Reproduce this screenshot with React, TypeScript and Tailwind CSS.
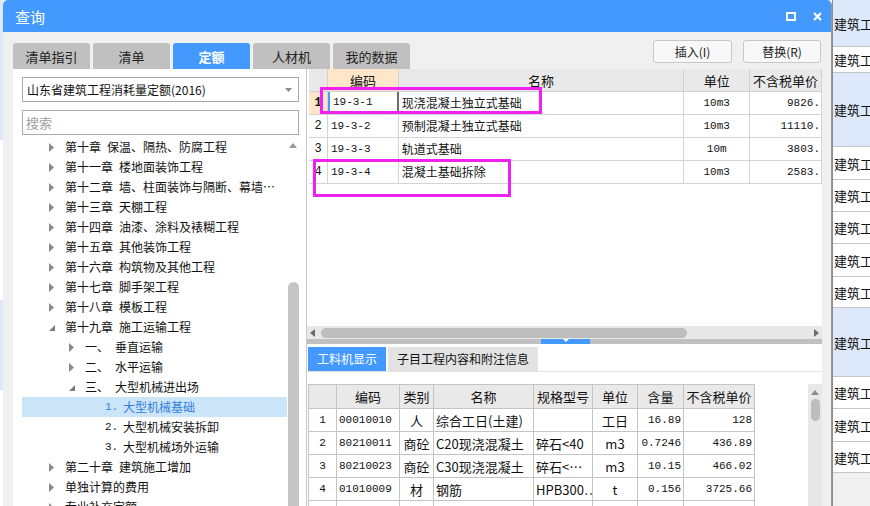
import React from 'react';

type TreeNode = {
  level: 1 | 2 | 3;
  label: string;
  name?: string;
  state?: 'closed' | 'open' | 'leaf';
  selected?: boolean;
};

const tree: TreeNode[] = [
  { level: 1, label: '第十章', name: '保温、隔热、防腐工程', state: 'closed' },
  { level: 1, label: '第十一章', name: '楼地面装饰工程', state: 'closed' },
  { level: 1, label: '第十二章', name: '墙、柱面装饰与隔断、幕墙…', state: 'closed' },
  { level: 1, label: '第十三章', name: '天棚工程', state: 'closed' },
  { level: 1, label: '第十四章', name: '油漆、涂料及裱糊工程', state: 'closed' },
  { level: 1, label: '第十五章', name: '其他装饰工程', state: 'closed' },
  { level: 1, label: '第十六章', name: '构筑物及其他工程', state: 'closed' },
  { level: 1, label: '第十七章', name: '脚手架工程', state: 'closed' },
  { level: 1, label: '第十八章', name: '模板工程', state: 'closed' },
  { level: 1, label: '第十九章', name: '施工运输工程', state: 'open' },
  { level: 2, label: '一、', name: '垂直运输', state: 'closed' },
  { level: 2, label: '二、', name: '水平运输', state: 'closed' },
  { level: 2, label: '三、', name: '大型机械进出场', state: 'open' },
  { level: 3, label: '1.', name: '大型机械基础', state: 'leaf', selected: true },
  { level: 3, label: '2.', name: '大型机械安装拆卸', state: 'leaf' },
  { level: 3, label: '3.', name: '大型机械场外运输', state: 'leaf' },
  { level: 1, label: '第二十章', name: '建筑施工增加', state: 'closed' },
  { level: 1, label: '单独计算的费用', state: 'closed' },
  { level: 1, label: '专业补充定额', state: 'closed' },
];

const quotas = [
  { no: '1', code: '19-3-1', name: '现浇混凝土独立式基础', unit: '10m3', price: '9826.' },
  { no: '2', code: '19-3-2', name: '预制混凝土独立式基础', unit: '10m3', price: '11110.' },
  { no: '3', code: '19-3-3', name: '轨道式基础', unit: '10m', price: '3803.' },
  { no: '4', code: '19-3-4', name: '混凝土基础拆除', unit: '10m3', price: '2583.' },
];

const materials = [
  { no: '1', code: '00010010', kind: '人', name: '综合工日(土建)', spec: '', unit: '工日', qty: '16.89', price: '128' },
  { no: '2', code: '80210011', kind: '商砼', name: 'C20现浇混凝土', spec: '碎石<40', unit: 'm3', qty: '0.7246', price: '436.89' },
  { no: '3', code: '80210023', kind: '商砼', name: 'C30现浇混凝土', spec: '碎石<…', unit: 'm3', qty: '10.15', price: '466.02' },
  { no: '4', code: '01010009', kind: '材', name: '钢筋', spec: 'HPB300…', unit: 't', qty: '0.156', price: '3725.66' },
  { no: '5', code: '01010010', kind: '材', name: '钢筋', spec: '', unit: 't', qty: '', price: '' },
];

const sideRows = [
  { h: 'h-[47px]', blue: true },
  { h: 'h-[26px]', blue: false },
  { h: 'h-[74px]', blue: true },
  { h: 'h-[33px]', blue: false },
  { h: 'h-[32px]', blue: false },
  { h: 'h-[32px]', blue: false },
  { h: 'h-[33px]', blue: false },
  { h: 'h-[31px]', blue: false },
  { h: 'h-[69px]', blue: true },
  { h: 'h-[32px]', blue: false },
  { h: 'h-[33px]', blue: false },
  { h: 'h-[31px]', blue: false },
];

function Caret({ open }: { open: boolean }) {
  if (open) {
    return (
      <svg width="7" height="7" viewBox="0 0 7 7" className="mt-[3px]">
        <path d="M6 0 L6 6 L0 6 Z" fill="#7b7b7b" />
      </svg>
    );
  }
  return (
    <svg width="5" height="9" viewBox="0 0 5 9">
      <path d="M0 0 L5 4.5 L0 9 Z" fill="#8a8a8a" />
    </svg>
  );
}

function TreeRow({ node }: { node: TreeNode }) {
  const text = node.selected ? 'text-[#2f7fe0]' : 'text-[#111]';
  return (
    <div
      className={`flex items-center h-[20px] whitespace-nowrap ${
        node.selected ? 'bg-[#cce4f7]' : ''
      } ${text}`}
    >
      {node.level === 1 && (
        <>
          <span className="w-[27px] shrink-0" />
          <span className="w-[16px] shrink-0 flex items-center">
            <Caret open={node.state === 'open'} />
          </span>
          <span>{node.label}</span>
          {node.name && <span className="ml-[6px]">{node.name}</span>}
        </>
      )}
      {node.level === 2 && (
        <>
          <span className="w-[47px] shrink-0" />
          <span className="w-[16px] shrink-0 flex items-center">
            <Caret open={node.state === 'open'} />
          </span>
          <span className="w-[30px] shrink-0">{node.label}</span>
          <span>{node.name}</span>
        </>
      )}
      {node.level === 3 && (
        <>
          <span className="w-[83px] shrink-0" />
          <span className="w-[18px] shrink-0 font-['Liberation_Mono',monospace] text-[11px]">{node.label}</span>
          <span>{node.name}</span>
        </>
      )}
    </div>
  );
}

export default function App() {
  return (
    <div className="flex w-[870px] h-[506px] overflow-hidden bg-white font-['Noto_Sans_CJK_SC','Noto_Sans',sans-serif] text-[12px] leading-none text-[#111]">
      {/* page behind the dialog, left edge */}
      <div className="w-[3px] shrink-0 flex flex-col">
        <div className="h-[140px] bg-[#dce8fb]" />
        <div className="h-[160px] bg-white" />
        <div className="h-[90px] bg-[#dce8fb]" />
        <div className="flex-1 bg-white" />
      </div>

      {/* dialog */}
      <div className="w-[829px] shrink-0 flex flex-col bg-[#f0f0f0] rounded-t-[5px] overflow-hidden border-r border-[#9a9a9a]">
        <div className="h-[32px] shrink-0 bg-[#4499ff] flex items-center pl-[12px] pr-[9px] text-white">
          <span className="text-[15px]">查询</span>
          <div className="ml-auto flex items-center gap-[17px]">
            <svg width="10" height="9" viewBox="0 0 10 9">
              <rect x="1" y="1" width="8" height="7" fill="none" stroke="#fff" strokeWidth="2" />
            </svg>
            <svg width="9" height="9" viewBox="0 0 9 9">
              <path d="M1 1 L8 8 M8 1 L1 8" stroke="#fff" strokeWidth="2.2" />
            </svg>
          </div>
        </div>

        <div className="h-[37px] shrink-0 flex px-[10px]">
          <div className="flex self-end gap-[3px]">
            {['清单指引', '清单', '定额', '人材机', '我的数据'].map((t) => (
              <div
                key={t}
                className={`w-[77px] h-[26px] rounded-t-[3px] flex items-center justify-center text-[13px] ${
                  t === '定额' ? 'bg-[#4499ff] text-white font-bold' : 'bg-[#c0c0c0] text-[#222]'
                }`}
              >
                {t}
              </div>
            ))}
          </div>
          <div className="ml-auto mt-[8px] flex gap-[11px] self-start">
            <button className="w-[79px] h-[23px] bg-[#f8f8f8] border border-[#c6c6c6] rounded-[3px] text-[12px] text-[#222]">
              插入(I)
            </button>
            <button className="w-[78px] h-[23px] bg-[#f8f8f8] border border-[#c6c6c6] rounded-[3px] text-[12px] text-[#222]">
              替换(R)
            </button>
          </div>
        </div>

        <div className="flex-1 flex pl-[10px] pr-[9px] min-h-0">
          {/* left panel */}
          <div className="w-[293px] shrink-0 bg-white flex flex-col pt-[8px] pl-[9px] pr-[7px]">
            <div className="h-[25px] shrink-0 border border-[#a9a9a9] flex items-center pl-[4px] pr-[6px]">
              <span>山东省建筑工程消耗量定额(2016)</span>
              <svg width="7" height="4" viewBox="0 0 7 4" className="ml-auto">
                <path d="M0 0 L7 0 L3.5 4 Z" fill="#8a8a8a" />
              </svg>
            </div>
            <div className="h-[25px] shrink-0 mt-[8px] border border-[#a9a9a9] flex items-center pl-[3px] text-[#a0a0a0] text-[13px]">
              搜索
            </div>
            <div className="flex-1 flex mt-[2px] min-h-0 overflow-hidden">
              <div className="flex-1 min-w-0">
                {tree.map((n, i) => (
                  <TreeRow key={i} node={n} />
                ))}
              </div>
              <div className="w-[12px] shrink-0 flex flex-col items-center pt-[6px]">
                <svg width="8" height="5" viewBox="0 0 8 5">
                  <path d="M0 5 L4 0 L8 5 Z" fill="#9a9a9a" />
                </svg>
                <div className="mt-[134px] w-[11px] flex-1 rounded-t-full bg-[#c6c6c6]" />
              </div>
            </div>
          </div>

          {/* right panel */}
          <div className="flex-1 min-w-0 bg-white border-l border-[#c8c8c8] flex flex-col pl-[2px] relative">
            <div className="h-[257px] shrink-0">
              <div className="flex h-[23px] bg-[#e9e9e9] border-b border-[#d0d0d0]">
                <div className="w-[19px] border-r border-[#d0d0d0]" />
                <div className="w-[71px] border-r border-[#d0d0d0] bg-[#fde6c9] flex items-center justify-center text-[13px]">编码</div>
                <div className="w-[286px] border-r border-[#d0d0d0] flex items-center justify-center text-[13px]">名称</div>
                <div className="w-[66px] border-r border-[#d0d0d0] flex items-center justify-center text-[13px]">单位</div>
                <div className="w-[72px] border-r border-[#d0d0d0] flex items-center justify-center text-[13px]">不含税单价</div>
              </div>
              {quotas.map((q, i) => (
                <div key={q.no} className="flex h-[23px] border-b border-[#d4d4d4]">
                  <div
                    className={`w-[19px] border-r border-[#d4d4d4] flex items-center justify-center font-['Liberation_Mono',monospace] text-[12px] ${
                      i === 0 ? 'bg-[#fde6c9] font-bold' : ''
                    }`}
                  >
                    {q.no}
                  </div>
                  <div
                    className={`w-[71px] flex items-center pl-[3px] font-['Liberation_Mono',monospace] text-[11px] ${
                      i === 0
                        ? 'border-l-2 border-l-[#4a9cf5] border-r-2 border-r-[#6c6c6c] border-b border-b-[#6c6c6c]'
                        : 'border-r border-[#d4d4d4]'
                    }`}
                  >
                    {q.code}
                  </div>
                  <div className="w-[286px] border-r border-[#d4d4d4] flex items-center pl-[3px]">{q.name}</div>
                  <div className="w-[66px] border-r border-[#d4d4d4] flex items-center justify-center font-['Liberation_Mono',monospace] text-[11px]">
                    {q.unit}
                  </div>
                  <div className="w-[72px] border-r border-[#d4d4d4] flex items-center justify-end pr-[1px] font-['Liberation_Mono',monospace] text-[11px]">
                    {q.price}
                  </div>
                </div>
              ))}
            </div>

            {/* horizontal scrollbar */}
            <div className="h-[13px] shrink-0 -ml-[2px] bg-[#e8e8e8] flex items-center px-[3px]">
              <svg width="5" height="8" viewBox="0 0 5 8">
                <path d="M5 0 L0 4 L5 8 Z" fill="#6a6a6a" />
              </svg>
              <div className="ml-[6px] w-[366px] h-[10px] rounded-full bg-[#bdbdbd]" />
              <svg width="5" height="8" viewBox="0 0 5 8" className="ml-auto">
                <path d="M0 0 L5 4 L0 8 Z" fill="#6a6a6a" />
              </svg>
            </div>
            {/* splitter */}
            <div className="h-[5px] shrink-0 -ml-[2px] bg-[#c0c0c0] flex">
              <div className="ml-[234px] w-[49px] bg-[#4499ff] flex justify-center">
                <svg width="6" height="3" viewBox="0 0 6 3">
                  <path d="M0 0 L6 0 L3 3 Z" fill="#fff" />
                </svg>
              </div>
            </div>

            {/* lower tabs */}
            <div className="h-[28px] shrink-0 flex items-end border-b border-[#e2e2e2] -ml-[1px]">
              <div className="w-[78px] h-[24px] bg-[#4499ff] text-white flex items-center justify-center text-[12px]">
                工料机显示
              </div>
              <div className="ml-[2px] w-[150px] h-[24px] bg-[#e3e3e3] flex items-center justify-center text-[12px]">
                子目工程内容和附注信息
              </div>
            </div>

            <div className="flex-1 flex pt-[12px] -ml-[1px] min-h-0 overflow-hidden">
              <div className="border-l border-t border-[#c4c4c4]">
                <div className="flex h-[24px] bg-[#e9e9e9] text-[13px]">
                  <div className="w-[28px] border-r border-b border-[#c4c4c4]" />
                  <div className="w-[63px] border-r border-b border-[#c4c4c4] flex items-center justify-center">编码</div>
                  <div className="w-[34px] border-r border-b border-[#c4c4c4] flex items-center justify-center">类别</div>
                  <div className="w-[100px] border-r border-b border-[#c4c4c4] flex items-center justify-center">名称</div>
                  <div className="w-[59px] border-r border-b border-[#c4c4c4] flex items-center justify-center">规格型号</div>
                  <div className="w-[45px] border-r border-b border-[#c4c4c4] flex items-center justify-center">单位</div>
                  <div className="w-[46px] border-r border-b border-[#c4c4c4] flex items-center justify-center">含量</div>
                  <div className="w-[71px] border-r border-b border-[#c4c4c4] flex items-center justify-center">不含税单价</div>
                </div>
                {materials.map((m) => (
                  <div key={m.no} className="flex h-[23px] whitespace-nowrap">
                    <div className="w-[28px] border-r border-b border-[#c4c4c4] flex items-center justify-center font-['Liberation_Mono',monospace] text-[11px]">
                      {m.no}
                    </div>
                    <div className="w-[63px] border-r border-b border-[#c4c4c4] flex items-center pl-[2px] font-['Liberation_Mono',monospace] text-[11px]">
                      {m.code}
                    </div>
                    <div className="w-[34px] border-r border-b border-[#c4c4c4] flex items-center justify-center text-[13px]">
                      {m.kind}
                    </div>
                    <div className="w-[100px] border-r border-b border-[#c4c4c4] flex items-center pl-[2px] overflow-hidden text-[13px]">
                      {m.name}
                    </div>
                    <div className="w-[59px] border-r border-b border-[#c4c4c4] flex items-center pl-[2px] overflow-hidden text-[13px]">
                      {m.spec}
                    </div>
                    <div className="w-[45px] border-r border-b border-[#c4c4c4] flex items-center justify-center text-[13px]">
                      {m.unit}
                    </div>
                    <div className="w-[46px] border-r border-b border-[#c4c4c4] flex items-center justify-end pr-[2px] font-['Liberation_Mono',monospace] text-[11px]">
                      {m.qty}
                    </div>
                    <div className="w-[71px] border-r border-b border-[#c4c4c4] flex items-center justify-end pr-[2px] font-['Liberation_Mono',monospace] text-[11px]">
                      {m.price}
                    </div>
                  </div>
                ))}
              </div>
              <div className="ml-auto w-[14px] bg-[#e8e8e8] flex flex-col items-center pt-[6px]">
                <svg width="8" height="5" viewBox="0 0 8 5">
                  <path d="M0 5 L4 0 L8 5 Z" fill="#8a8a8a" />
                </svg>
                <div className="mt-[4px] w-[9px] h-[22px] rounded-full bg-[#bdbdbd]" />
              </div>
            </div>

            {/* highlight marks */}
            <div className="absolute left-[13px] top-[18px] w-[222px] h-[27px] border-[3px] border-[#f020f0]" />
            <div className="absolute left-[6px] top-[90px] w-[198px] h-[38px] border-[3px] border-[#f020f0]" />
          </div>
        </div>
      </div>

      {/* page behind the dialog, right edge */}
      <div className="flex-1 flex flex-col border-l border-[#8e8e8e] text-[13px]">
        {sideRows.map((r, i) => (
          <div
            key={i}
            className={`${r.h} shrink-0 border-b border-[#c4c4c4] flex items-center pl-[1px] whitespace-nowrap overflow-hidden ${
              r.blue ? 'bg-[#dde8fb]' : 'bg-white'
            }`}
          >
            建筑工
          </div>
        ))}
        <div className="flex-1 bg-[#f0f0f0]" />
      </div>
    </div>
  );
}
